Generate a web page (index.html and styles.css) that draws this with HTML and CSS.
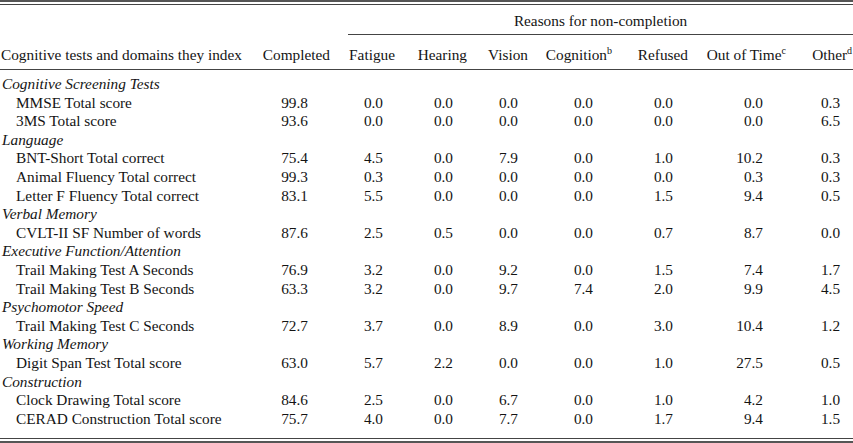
FILE: index.html
```html
<!DOCTYPE html>
<html lang="en">
<head>
<meta charset="utf-8">
<title>Cognitive tests completion</title>
<link rel="stylesheet" href="styles.css">
</head>
<body>
<div class="table-wrap">
<table class="data-table">
<colgroup>
<col class="w-label"><col class="w-completed"><col class="w-fatigue"><col class="w-hearing"><col class="w-vision"><col class="w-cognition"><col class="w-refused"><col class="w-time"><col class="w-other">
</colgroup>
<thead>
<tr class="head-top">
<th></th><th></th>
<th colspan="7" class="spanner">Reasons for non-completion</th>
</tr>
<tr class="head-cols">
<th class="label-head">Cognitive tests and domains they index</th>
<th>Completed</th>
<th>Fatigue</th>
<th>Hearing</th>
<th>Vision</th>
<th>Cognition<sup>b</sup></th>
<th>Refused</th>
<th>Out of Time<sup>c</sup></th>
<th>Other<sup>d</sup></th>
</tr>
</thead>
<tbody>
<tr class="cat first"><td colspan="9">Cognitive Screening Tests</td></tr>
<tr><td>MMSE Total score</td><td>99.8</td><td>0.0</td><td>0.0</td><td>0.0</td><td>0.0</td><td>0.0</td><td>0.0</td><td>0.3</td></tr>
<tr><td>3MS Total score</td><td>93.6</td><td>0.0</td><td>0.0</td><td>0.0</td><td>0.0</td><td>0.0</td><td>0.0</td><td>6.5</td></tr>
<tr class="cat"><td colspan="9">Language</td></tr>
<tr><td>BNT-Short Total correct</td><td>75.4</td><td>4.5</td><td>0.0</td><td>7.9</td><td>0.0</td><td>1.0</td><td>10.2</td><td>0.3</td></tr>
<tr><td>Animal Fluency Total correct</td><td>99.3</td><td>0.3</td><td>0.0</td><td>0.0</td><td>0.0</td><td>0.0</td><td>0.3</td><td>0.3</td></tr>
<tr><td>Letter F Fluency Total correct</td><td>83.1</td><td>5.5</td><td>0.0</td><td>0.0</td><td>0.0</td><td>1.5</td><td>9.4</td><td>0.5</td></tr>
<tr class="cat"><td colspan="9">Verbal Memory</td></tr>
<tr><td>CVLT-II SF Number of words</td><td>87.6</td><td>2.5</td><td>0.5</td><td>0.0</td><td>0.0</td><td>0.7</td><td>8.7</td><td>0.0</td></tr>
<tr class="cat"><td colspan="9">Executive Function/Attention</td></tr>
<tr><td>Trail Making Test A Seconds</td><td>76.9</td><td>3.2</td><td>0.0</td><td>9.2</td><td>0.0</td><td>1.5</td><td>7.4</td><td>1.7</td></tr>
<tr><td>Trail Making Test B Seconds</td><td>63.3</td><td>3.2</td><td>0.0</td><td>9.7</td><td>7.4</td><td>2.0</td><td>9.9</td><td>4.5</td></tr>
<tr class="cat"><td colspan="9">Psychomotor Speed</td></tr>
<tr><td>Trail Making Test C Seconds</td><td>72.7</td><td>3.7</td><td>0.0</td><td>8.9</td><td>0.0</td><td>3.0</td><td>10.4</td><td>1.2</td></tr>
<tr class="cat"><td colspan="9">Working Memory</td></tr>
<tr><td>Digit Span Test Total score</td><td>63.0</td><td>5.7</td><td>2.2</td><td>0.0</td><td>0.0</td><td>1.0</td><td>27.5</td><td>0.5</td></tr>
<tr class="cat"><td colspan="9">Construction</td></tr>
<tr><td>Clock Drawing Total score</td><td>84.6</td><td>2.5</td><td>0.0</td><td>6.7</td><td>0.0</td><td>1.0</td><td>4.2</td><td>1.0</td></tr>
<tr class="last"><td>CERAD Construction Total score</td><td>75.7</td><td>4.0</td><td>0.0</td><td>7.7</td><td>0.0</td><td>1.7</td><td>9.4</td><td>1.5</td></tr>
</tbody>
</table>
</div>
</body>
</html>
```
FILE: styles.css
```css
html, body {
  margin: 0;
  padding: 0;
  background: #ffffff;
}

body,
.data-table,
.data-table th,
.data-table td {
  font-family: "Liberation Serif", "Times New Roman", Tinos, "DejaVu Serif", serif;
  font-size: 15.3px;
  color: #141414;
}

.table-wrap {
  width: 853px;
  border-top: 2px solid #555;
  border-bottom: 2px solid #555;
  padding: 2px 0;
}

.data-table {
  width: 853px;
  table-layout: fixed;
  border-collapse: separate;
  border-spacing: 0;
  border-top: 1px solid #444;
  border-bottom: 1px solid #444;
}

.w-label { width: 258px; }
.w-completed { width: 90px; }
.w-fatigue { width: 52px; }
.w-hearing { width: 72px; }
.w-vision { width: 62px; }
.w-cognition { width: 84px; }
.w-refused { width: 76px; }
.w-time { width: 98px; }
.w-other { width: 61px; }

.data-table th,
.data-table td {
  padding: 0;
  line-height: 19px;
  height: 19px;
  font-weight: normal;
  white-space: nowrap;
  vertical-align: top;
}

.data-table tbody td {
  line-height: 18.6px;
  height: 18.6px;
}

.data-table sup {
  font-size: 10px;
  line-height: 0;
  vertical-align: 6px;
}

/* header row with spanner */
.head-top th {
  padding-top: 6px;
  padding-bottom: 4px;
}

.head-top .spanner {
  text-align: center;
  border-bottom: 1px solid #444;
}

.head-cols th {
  padding-top: 10px;
  padding-bottom: 5px;
  border-bottom: 1px solid #444;
  text-align: right;
}

.head-cols .label-head {
  text-align: left;
  padding-left: 1px;
}

.head-cols th:nth-child(2) { padding-right: 18px; }
.head-cols th:nth-child(3) { padding-right: 5px; }
.head-cols th:nth-child(4) { padding-right: 5px; }
.head-cols th:nth-child(5) { padding-right: 6px; }
.head-cols th:nth-child(6) { padding-right: 6px; }
.head-cols th:nth-child(7) { padding-right: 6px; }
.head-cols th:nth-child(8) { padding-right: 6px; }
.head-cols th:nth-child(9) { padding-right: 1px; }

/* body */
.data-table tbody td {
  text-align: right;
}

.data-table tbody td:first-child {
  text-align: left;
  padding-left: 16px;
}

.data-table tbody tr.cat td {
  font-style: italic;
  text-align: left;
  padding-left: 2px;
}

.data-table tbody td:nth-child(2) { padding-right: 40px; }
.data-table tbody td:nth-child(3) { padding-right: 17px; }
.data-table tbody td:nth-child(4) { padding-right: 19px; }
.data-table tbody td:nth-child(5) { padding-right: 16px; }
.data-table tbody td:nth-child(6) { padding-right: 25px; }
.data-table tbody td:nth-child(7) { padding-right: 21px; }
.data-table tbody td:nth-child(8) { padding-right: 29px; }
.data-table tbody td:nth-child(9) { padding-right: 13px; }

.data-table tbody tr.first td {
  padding-top: 5px;
}

.data-table tbody tr.last td {
  padding-bottom: 10px;
}
```
